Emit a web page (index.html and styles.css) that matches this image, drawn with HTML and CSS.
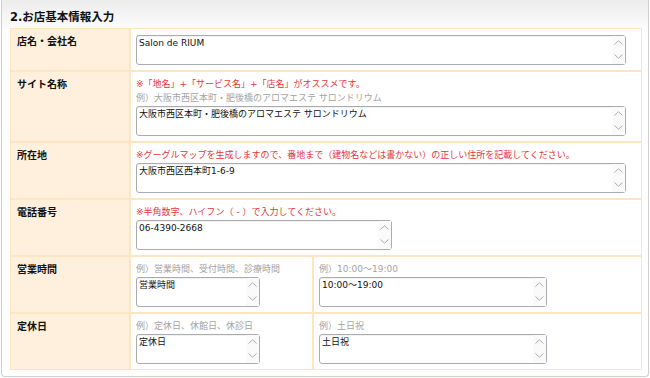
FILE: index.html
```html
<!DOCTYPE html>
<html lang="ja">
<head>
    <meta charset="UTF-8">
    <meta name="viewport" content="width=device-width, initial-scale=1.0">
    <title>お店基本情報入力</title>
    <link rel="stylesheet" href="styles.css">
</head>
<body>
    <div class="panel">
        <h2 class="panel-title">2.お店基本情報入力</h2>

        <table class="form-table">
            <colgroup>
                <col class="col-label">
                <col class="col-half">
                <col class="col-rest">
            </colgroup>
            <tr>
                <th>店名・会社名</th>
                <td colspan="2">
                    <div class="field field-full">
                        <textarea>Salon de RIUM</textarea>
                        <span class="scroll">
                            <svg width="9" height="5" viewBox="0 0 9 5"><polyline points="0.5,4.5 4.5,0.8 8.5,4.5"/></svg>
                            <svg width="9" height="5" viewBox="0 0 9 5"><polyline points="0.5,0.5 4.5,4.2 8.5,0.5"/></svg>
                        </span>
                    </div>
                </td>
            </tr>
            <tr>
                <th>サイト名称</th>
                <td colspan="2">
                    <p class="note note-red">※「地名」+「サービス名」+「店名」がオススメです。</p>
                    <p class="note">例）大阪市西区本町・肥後橋のアロマエステ サロンドリウム</p>
                    <div class="field field-full">
                        <textarea>大阪市西区本町・肥後橋のアロマエステ サロンドリウム</textarea>
                        <span class="scroll">
                            <svg width="9" height="5" viewBox="0 0 9 5"><polyline points="0.5,4.5 4.5,0.8 8.5,4.5"/></svg>
                            <svg width="9" height="5" viewBox="0 0 9 5"><polyline points="0.5,0.5 4.5,4.2 8.5,0.5"/></svg>
                        </span>
                    </div>
                </td>
            </tr>
            <tr>
                <th>所在地</th>
                <td colspan="2">
                    <p class="note note-red">※グーグルマップを生成しますので、番地まで（建物名などは書かない）の正しい住所を記載してください。</p>
                    <div class="field field-full">
                        <textarea>大阪市西区西本町1-6-9</textarea>
                        <span class="scroll">
                            <svg width="9" height="5" viewBox="0 0 9 5"><polyline points="0.5,4.5 4.5,0.8 8.5,4.5"/></svg>
                            <svg width="9" height="5" viewBox="0 0 9 5"><polyline points="0.5,0.5 4.5,4.2 8.5,0.5"/></svg>
                        </span>
                    </div>
                </td>
            </tr>
            <tr>
                <th>電話番号</th>
                <td colspan="2">
                    <p class="note note-red">※半角数字、ハイフン（ - ）で入力してください。</p>
                    <div class="field field-tel">
                        <textarea>06-4390-2668</textarea>
                        <span class="scroll">
                            <svg width="9" height="5" viewBox="0 0 9 5"><polyline points="0.5,4.5 4.5,0.8 8.5,4.5"/></svg>
                            <svg width="9" height="5" viewBox="0 0 9 5"><polyline points="0.5,0.5 4.5,4.2 8.5,0.5"/></svg>
                        </span>
                    </div>
                </td>
            </tr>
            <tr>
                <th>営業時間</th>
                <td>
                    <p class="note">例）営業時間、受付時間、診療時間</p>
                    <div class="field field-small">
                        <textarea>営業時間</textarea>
                        <span class="scroll">
                            <svg width="9" height="5" viewBox="0 0 9 5"><polyline points="0.5,4.5 4.5,0.8 8.5,4.5"/></svg>
                            <svg width="9" height="5" viewBox="0 0 9 5"><polyline points="0.5,0.5 4.5,4.2 8.5,0.5"/></svg>
                        </span>
                    </div>
                </td>
                <td>
                    <p class="note">例）10:00～19:00</p>
                    <div class="field field-medium">
                        <textarea>10:00～19:00</textarea>
                        <span class="scroll">
                            <svg width="9" height="5" viewBox="0 0 9 5"><polyline points="0.5,4.5 4.5,0.8 8.5,4.5"/></svg>
                            <svg width="9" height="5" viewBox="0 0 9 5"><polyline points="0.5,0.5 4.5,4.2 8.5,0.5"/></svg>
                        </span>
                    </div>
                </td>
            </tr>
            <tr>
                <th>定休日</th>
                <td>
                    <p class="note">例）定休日、休館日、休診日</p>
                    <div class="field field-small">
                        <textarea>定休日</textarea>
                        <span class="scroll">
                            <svg width="9" height="5" viewBox="0 0 9 5"><polyline points="0.5,4.5 4.5,0.8 8.5,4.5"/></svg>
                            <svg width="9" height="5" viewBox="0 0 9 5"><polyline points="0.5,0.5 4.5,4.2 8.5,0.5"/></svg>
                        </span>
                    </div>
                </td>
                <td>
                    <p class="note">例）土日祝</p>
                    <div class="field field-medium">
                        <textarea>土日祝</textarea>
                        <span class="scroll">
                            <svg width="9" height="5" viewBox="0 0 9 5"><polyline points="0.5,4.5 4.5,0.8 8.5,4.5"/></svg>
                            <svg width="9" height="5" viewBox="0 0 9 5"><polyline points="0.5,0.5 4.5,4.2 8.5,0.5"/></svg>
                        </span>
                    </div>
                </td>
            </tr>
        </table>
    </div>
</body>
</html>
```

FILE: styles.css
```css
body {
    margin: 0;
    background-color: #fff;
    color: #222;
    font-family: "DejaVu Sans", Verdana, "Noto Sans CJK JP", sans-serif;
    overflow: hidden;
}

.panel {
    height: 377px;
    margin: 0 1px 1px;
    padding: 0 5px 0 8px;
    box-sizing: border-box;
    border: 1px solid #cfcfcf;
    border-top: none;
    border-radius: 0 0 4px 4px;
    background: linear-gradient(#ececec, #fff 34px);
}

.panel-title {
    margin: 0;
    padding: 10px 0 3px;
    font-size: 11.5px;
    line-height: 15px;
    font-weight: bold;
    color: #111;
}

.form-table {
    width: 632px;
    table-layout: fixed;
    border-collapse: separate;
    border-spacing: 0;
}

.col-label {
    width: 120px;
}

.col-half {
    width: 183px;
}

.col-rest {
    width: 329px;
}

.form-table th,
.form-table td {
    border: 1px solid #fde5c2;
    padding: 6px 5px 5px;
    vertical-align: top;
    text-align: left;
}

.form-table th {
    padding-left: 6px;
    background-color: #fef0dc;
    font-size: 10px;
    line-height: 13px;
    font-weight: bold;
    color: #111;
}

.form-table td {
    background-color: #fff;
}

.note {
    margin: 0 0 1px;
    font-size: 9px;
    line-height: 13px;
    color: #a3a3a3;
    white-space: nowrap;
}

.note-red {
    color: #e3363a;
}

.field {
    display: flex;
    height: 30px;
    box-sizing: border-box;
    border: 1px solid #a9abb0;
    border-radius: 3px;
    background-color: #fff;
    box-shadow: inset 0 1px 1px rgba(0, 0, 0, 0.06);
}

.field-full {
    width: 490px;
}

.field-tel {
    width: 256px;
}

.field-small {
    width: 124px;
}

.field-medium {
    width: 228px;
}

.field textarea {
    flex: 1;
    min-width: 0;
    margin: 0;
    padding: 1px 2px;
    border: none;
    background: transparent;
    resize: none;
    overflow: hidden;
    font-family: inherit;
    font-size: 9px;
    line-height: 12px;
    color: #111;
}

.scroll {
    display: flex;
    flex-direction: column;
    justify-content: space-between;
    align-items: center;
    width: 13px;
    padding: 4px 0 5px;
    box-sizing: border-box;
    background-color: #fafafa;
}

.scroll svg {
    display: block;
    fill: none;
    stroke: #ababab;
    stroke-width: 1;
}
```
